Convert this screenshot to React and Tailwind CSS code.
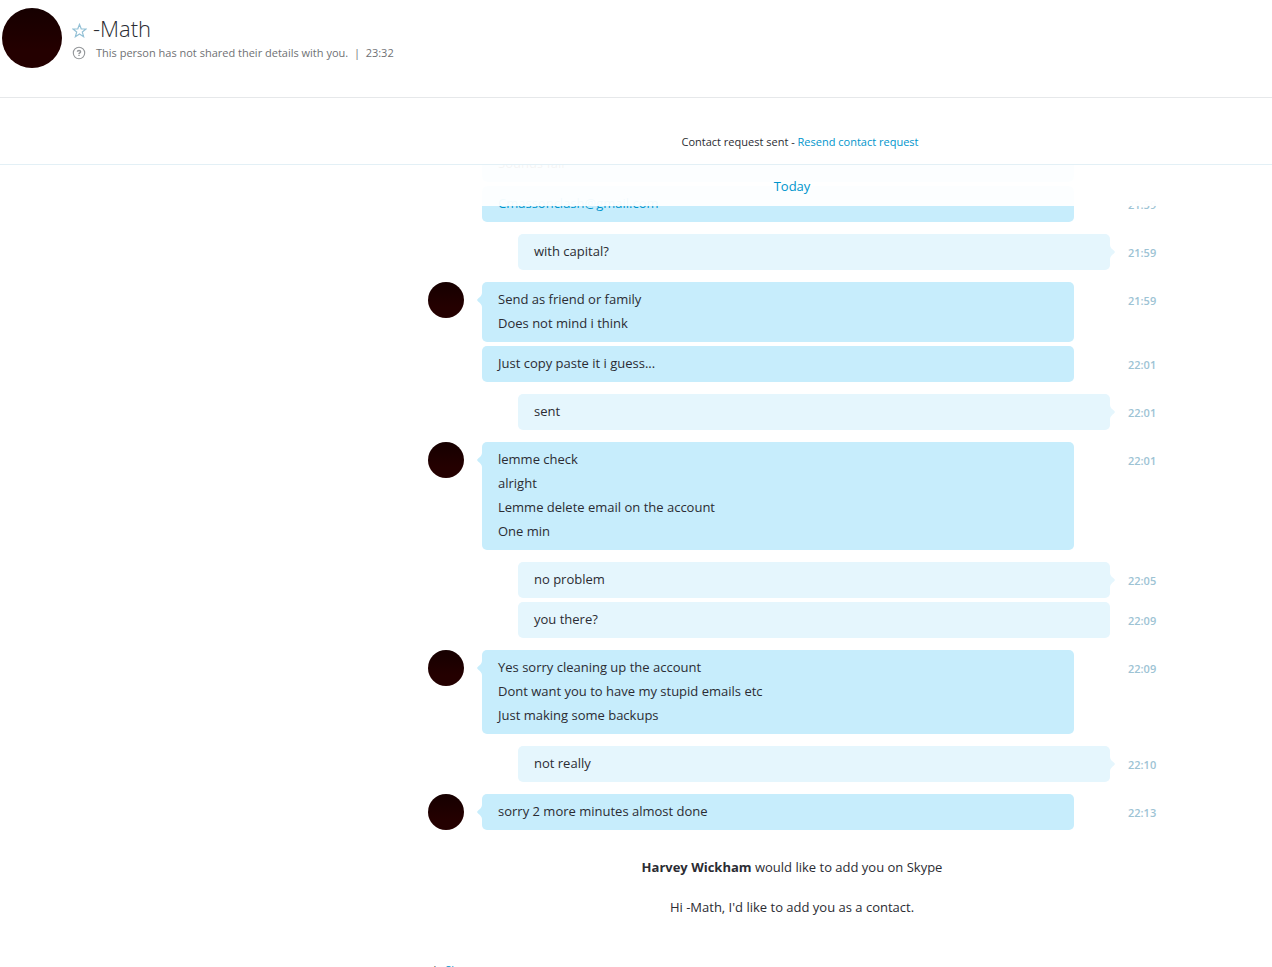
import { useState } from "react";

const groups = [
  {
    from: "them",
    continued: true,
    bubbles: [
      { lines: ["Sounds fair"], time: "" },
      { lines: ["Cmassonclash@gmail.com"], time: "21:59", email: true },
    ],
  },
  { from: "me", bubbles: [{ lines: ["with capital?"], time: "21:59" }] },
  {
    from: "them",
    bubbles: [
      { lines: ["Send as friend or family", "Does not mind i think"], time: "21:59" },
      { lines: ["Just copy paste it i guess..."], time: "22:01" },
    ],
  },
  { from: "me", bubbles: [{ lines: ["sent"], time: "22:01" }] },
  {
    from: "them",
    bubbles: [
      {
        lines: ["lemme check", "alright", "Lemme delete email on the account", "One min"],
        time: "22:01",
      },
    ],
  },
  {
    from: "me",
    bubbles: [
      { lines: ["no problem"], time: "22:05" },
      { lines: ["you there?"], time: "22:09" },
    ],
  },
  {
    from: "them",
    bubbles: [
      {
        lines: [
          "Yes sorry cleaning up the account",
          "Dont want you to have my stupid emails etc",
          "Just making some backups",
        ],
        time: "22:09",
      },
    ],
  },
  { from: "me", bubbles: [{ lines: ["not really"], time: "22:10" }] },
  { from: "them", bubbles: [{ lines: ["sorry 2 more minutes almost done"], time: "22:13" }] },
];

const Avatar = ({ className }) => (
  <div className={`shrink-0 rounded-full bg-linear-to-b from-[#160000] to-[#240000] to-70% ${className}`} />
);

const StarIcon = () => (
  <svg width="15" height="15" viewBox="0 0 15 15" fill="none" stroke="#94c1d6" strokeWidth="1.2">
    <path d="M7.500 1.400l1.700 4.400 4.800.2-3.700 3 1.300 4.700-4.100-2.700-4.100 2.700 1.300-4.700-3.700-3 4.800-.2z" />
  </svg>
);

const UnknownIcon = () => (
  <svg width="14" height="14" viewBox="0 0 14 14" fill="none" stroke="#94979a">
    <circle cx="7" cy="7" r="5.700" strokeWidth="1.100" />
    <path d="M5.400 5.800c0-1.800 3.200-1.800 3.200 0 0 1.200-1.600 1.100-1.600 2.200" strokeWidth="1.400" />
    <path d="M7 8.800v1.300" strokeWidth="1.400" />
  </svg>
);

// Little pointer on the side of the first bubble of a group
const Tail = ({ mine }) =>
  mine ? (
    <svg className="absolute top-[11px] -right-[5px]" width="5" height="14" viewBox="0 0 5 14" fill="#e5f6fd">
      <path d="M0 0c.2 2.600 2 4 3.600 5.300 1.700 1.300 1.700 2.100 0 3.400C2 10 .2 11.400 0 14z" />
    </svg>
  ) : (
    <svg className="absolute top-[11px] -left-[5px]" width="5" height="14" viewBox="0 0 5 14" fill="#c7edfc">
      <path d="M5 0C4.800 2.600 3 4 1.400 5.300c-1.700 1.300-1.700 2.100 0 3.400C3 10 4.800 11.400 5 14z" />
    </svg>
  );

const Bubble = ({ bubble, mine, first, continued }) => (
  <div className={`flex ${mine ? "pl-[90px]" : ""}`}>
    {!mine && (
      <div className="w-[54px] shrink-0">{first && !continued && <Avatar className="size-9" />}</div>
    )}
    <div
      className={`relative min-w-0 flex-1 rounded-[5px] px-4 pt-[5px] pb-[7px] ${
        mine ? "bg-[#e5f6fd]" : "mr-9 bg-[#c7edfc]"
      }`}
    >
      {first && !continued && <Tail mine={mine} />}
      {bubble.lines.map((line) => (
        <p key={line} className="text-[13px] leading-6">
          {bubble.email ? (
            <a href={`mailto:${line}`} className="text-[#0095cc]">
              {line}
            </a>
          ) : (
            line
          )}
        </p>
      ))}
    </div>
    <time className="w-[46px] shrink-0 pt-[7px] pl-[18px] text-[11px] leading-6 font-semibold text-[#9dc3d4]">
      {bubble.time}
    </time>
  </div>
);

const App = () => {
  const [favorite, setFavorite] = useState(false);

  return (
    <div className="flex h-screen flex-col overflow-hidden bg-white font-['Open_Sans','Noto_Sans',sans-serif] text-[#2b2c33]">
      {/* Contact header */}
      <header className="flex h-[98px] shrink-0 border-b border-[#e6e8ea] pt-2 pl-0.5">
        <Avatar className="size-[60px]" />
        <div className="pt-1.5 pl-2.5">
          <div className="flex items-center gap-1.5">
            <button
              type="button"
              aria-label="Favorite"
              aria-pressed={favorite}
              className="pt-1"
              onClick={() => setFavorite((prev) => !prev)}
            >
              <StarIcon />
            </button>
            <h1 className="text-[22px] leading-7 font-light">-Math</h1>
          </div>
          <div className="flex items-center gap-2.5 pt-[3px] text-[11px] leading-4 text-[#6f7174]">
            <UnknownIcon />
            <p className="whitespace-pre">This person has not shared their details with you.  |  23:32</p>
          </div>
        </div>
      </header>

      {/* Contact request notice */}
      <div className="h-[67px] shrink-0 border-b border-[#e3f0f6] pt-9 pl-[328px] text-center text-[11px] leading-4">
        Contact request sent -{" "}
        <a href="#resend" className="text-[#0095cc]">
          Resend contact request
        </a>
      </div>

      {/* Conversation */}
      <main className="relative shrink-0 overflow-hidden pl-[312px]">
        <div className="absolute inset-x-0 top-0 z-10 bg-white/95 pt-[9px] pb-2 pl-[312px] text-center text-[13px] leading-6 text-[#0095cc]">
          Today
        </div>
        <div className="mx-auto -mt-[19px] flex max-w-[728px] flex-col gap-3">
          {groups.map((group, i) => (
            <section key={i} className="flex flex-col gap-1">
              {group.bubbles.map((bubble, j) => (
                <Bubble
                  key={j}
                  bubble={bubble}
                  mine={group.from === "me"}
                  first={j === 0}
                  continued={group.continued}
                />
              ))}
            </section>
          ))}
        </div>
        <div className="flex flex-col gap-4 pt-[25px] text-center text-[13px] leading-6">
          <p>
            <b>Harvey Wickham</b> would like to add you on Skype
          </p>
          <p>Hi -Math, I'd like to add you as a contact.</p>
        </div>
      </main>

      {/* Composer, mostly below the fold */}
      <footer className="shrink-0 pt-[43px] pl-[312px]">
        <p className="mx-auto max-w-[728px] text-[11px] leading-4">
          via{" "}
          <a href="#skype" className="text-[#0095cc]">
            Skype
          </a>
        </p>
      </footer>
    </div>
  );
};

export default App;
